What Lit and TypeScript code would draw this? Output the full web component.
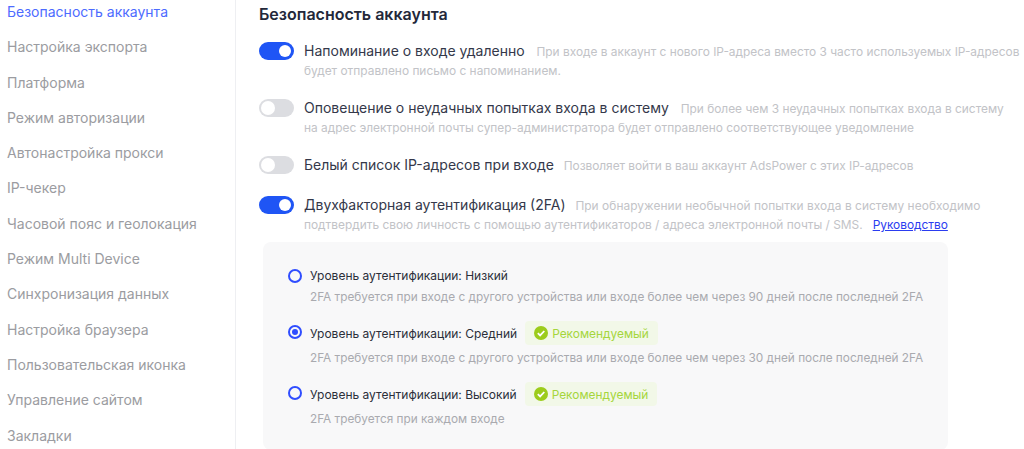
import { LitElement, html, css, svg } from "lit";
import { customElement } from "lit/decorators.js";

const NAV = ["Безопасность аккаунта","Настройка экспорта","Платформа","Режим авторизации","Автонастройка прокси","IP-чекер","Часовой пояс и геолокация","Режим Multi Device","Синхронизация данных","Настройка браузера","Пользовательская иконка","Управление сайтом","Закладки"];

const check = svg`<svg class="chk" width="14" height="14" viewBox="0 0 14 14"><circle cx="7" cy="7" r="7" fill="#9ccc1c"/><path d="M3.8 7.2 6.1 9.4 10.3 5" fill="none" stroke="#fff" stroke-width="1.8"/></svg>`;

@customElement("app-root")
export class AppRoot extends LitElement {
  static styles = css`
    :host { display: flex; width: 1024px; height: 449px; overflow: hidden; background: #fff; font-family: Inter, "Noto Sans", sans-serif; color: #2b2f3a; }
    .side { width: 236px; flex: none; border-right: 1px solid #eeeff2; padding: 3px 0 0 7px; box-sizing: border-box; height: 449px; overflow: hidden; }
    .nav { height: 35.3px; line-height: 18px; font-size: 14px; color: #9b9ca1; white-space: nowrap; }
    .nav.on { color: #4d6bff; }
    .main { flex: 1; padding: 5px 0 0 23px; min-width: 0; }
    h1 { margin: 0 0 15px; font-size: 16px; line-height: 19px; font-weight: 600; color: #23283a; }
    .row { display: flex; gap: 10px; margin-bottom: 17px; }
    .sw { flex: none; width: 35px; height: 18px; border-radius: 9px; background: #dcdde1; position: relative; margin-top: 3px; }
    .sw::after { content: ""; position: absolute; left: 2px; top: 2px; width: 14px; height: 14px; border-radius: 50%; background: #fff; }
    .sw.on { background: #1f55f5; }
    .sw.on::after { left: 20px; top: 3px; width: 12px; height: 12px; }
    .txt { font-size: 11.9px; color: #c2c3c7; white-space: nowrap; }
    .l1 { height: 23px; line-height: 23px; }
    .l2 { height: 17px; line-height: 17px; }
    .t { font-size: 14px; color: #34384a; margin-right: 8.5px; }
    .t.tight { margin-right: 6.5px; }
    .narrow { letter-spacing: -0.04px; }
    .wide { letter-spacing: 0.06px; }
    .txt a { color: #2b3cf0; text-decoration: underline; margin-left: 10px; }
    .panel { width: 685px; height: 208px; margin: -8px 0 0 4px; border-radius: 8px; background: #f8f8f9; padding: 24px 0 0 25px; box-sizing: border-box; }
    .lv { margin-bottom: 15px; }
    .top { display: flex; align-items: center; gap: 8px; min-height: 18px; font-size: 12px; color: #2b2f3a; }
    .radio { width: 14px; height: 14px; flex: none; border: 2px solid #2f4dff; border-radius: 50%; box-sizing: border-box; display: flex; align-items: center; justify-content: center; margin-top: 2px; }
    .radio.on::after { content: ""; width: 6px; height: 6px; background: #2f4dff; border-radius: 50%; }
    .rec .radio { margin-top: -3px; }
    .tag { display: flex; align-items: center; gap: 4px; height: 24px; padding: 0 9px; background: #f2f8e8; border-radius: 4px; color: #a5d63c; font-size: 11.9px; }
    .d { margin: 4px 0 0 22px; font-size: 11.8px; line-height: 18px; color: #a9aaaf; white-space: nowrap; }
  `;
  render() {
    const lv = (name: string, on: boolean, rec: boolean, d: string) => html`
      <div class="lv"><div class="top ${rec ? "rec" : ""}"><span class="radio ${on ? "on" : ""}"></span><span>Уровень аутентификации: ${name}</span>${rec ? html`<span class="tag">${check}Рекомендуемый</span>` : ""}</div><div class="d">${d}</div></div>`;
    return html`
      <div class="side">${NAV.map((n, i) => html`<div class="nav ${i === 0 ? "on" : ""}">${n}</div>`)}</div>
      <div class="main">
        <h1>Безопасность аккаунта</h1>
        <div class="row"><span class="sw on"></span><div class="txt"><div class="l1"><span class="t">Напоминание о входе удаленно</span> При входе в аккаунт с нового IP-адреса вместо 3 часто используемых IP-адресов</div><div class="l2">будет отправлено письмо с напоминанием.</div></div></div>
        <div class="row"><span class="sw"></span><div class="txt"><div class="l1"><span class="t">Оповещение о неудачных попытках входа в систему</span> При более чем 3 неудачных попытках входа в систему</div><div class="l2">на адрес электронной почты супер-администратора будет отправлено соответствующее уведомление</div></div></div>
        <div class="row"><span class="sw"></span><div class="txt"><div class="l1"><span class="t tight">Белый список IP-адресов при входе</span> <span class="narrow">Позволяет войти в ваш аккаунт AdsPower с этих IP-адресов</span></div></div></div>
        <div class="row"><span class="sw on"></span><div class="txt"><div class="l1"><span class="t tight">Двухфакторная аутентификация (2FA)</span> <span class="wide">При обнаружении необычной попытки входа в систему необходимо</span></div><div class="l2">подтвердить свою личность с помощью аутентификаторов / адреса электронной почты / SMS.<a>Руководство</a></div></div></div>
        <div class="panel">
          ${lv("Низкий", false, false, "2FA требуется при входе с другого устройства или входе более чем через 90 дней после последней 2FA")}
          ${lv("Средний", true, true, "2FA требуется при входе с другого устройства или входе более чем через 30 дней после последней 2FA")}
          ${lv("Высокий", false, true, "2FA требуется при каждом входе")}
        </div>
      </div>`;
  }
}
